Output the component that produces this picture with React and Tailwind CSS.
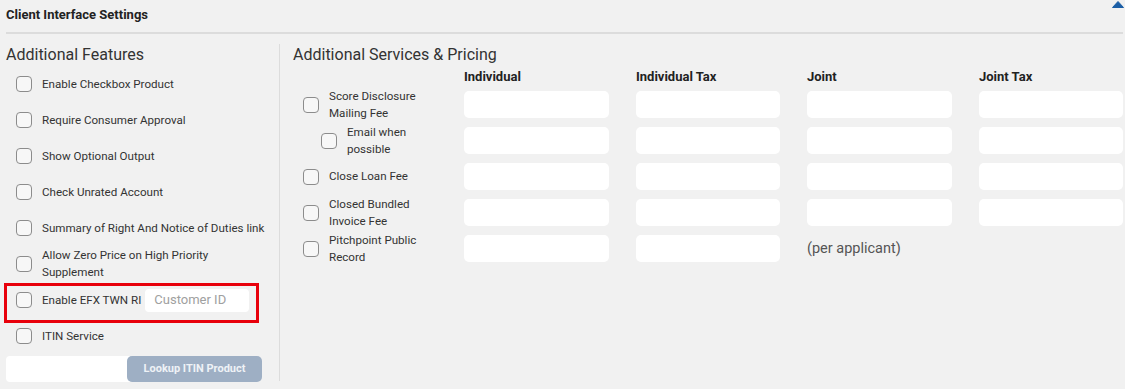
const features = [
  'Enable Checkbox Product',
  'Require Consumer Approval',
  'Show Optional Output',
  'Check Unrated Account',
  'Summary of Right And Notice of Duties link',
  'Allow Zero Price on High Priority Supplement',
]

const services = [
  { label: 'Score Disclosure Mailing Fee', cols: 4 },
  { label: 'Email when possible', cols: 4, indent: true },
  { label: 'Close Loan Fee', cols: 4 },
  { label: 'Closed Bundled Invoice Fee', cols: 4 },
  { label: 'Pitchpoint Public Record', cols: 2, note: '(per applicant)' },
]

function Checkbox() {
  return (
    <span className="inline-block w-[16px] h-[16px] shrink-0 rounded-[4px] border-[1.5px] border-[#8c8c8c] bg-[#f7f7f7]" />
  )
}

function Field({ className = '' }) {
  return <div className={`h-[27px] rounded-[5px] bg-white ${className}`} />
}

export default function App() {
  return (
    <div
      className="w-[1125px] h-[389px] overflow-hidden bg-[#f1f1f1] px-[6px] text-[#333]"
      style={{ fontFamily: 'Roboto, "Liberation Sans", sans-serif' }}
    >
      {/* Header */}
      <div className="flex justify-between h-[34px] border-b-2 border-[#dcdcdc] w-[1117px]">
        <div className="pt-[6px] text-[13px] leading-[18px] font-bold text-[#222]">
          Client Interface Settings
        </div>
        <svg className="mt-[1px] -mr-[1px]" width="12" height="7" viewBox="0 0 12 7">
          <path d="M6 0.5 L11.5 6.5 L0.5 6.5 Z" fill="#1c5fa6" stroke="#1c5fa6" strokeLinejoin="round" />
        </svg>
      </div>

      <div className="flex">
        {/* Additional Features */}
        <div className="w-[274px] shrink-0 mt-[10px] h-[337px] border-r border-[#dcdcdc]">
          <div className="h-[22px] pt-[1px] text-[16px] leading-[20px] text-[#333]">Additional Features</div>
          {features.map((f) => (
            <div key={f} className="h-[36px] flex items-center pl-[10px] gap-[10px]">
              <Checkbox />
              <span className="text-[11.6px] leading-[17px] w-[226px]">{f}</span>
            </div>
          ))}
          <div className="relative h-[36px] flex items-center pl-[10px] gap-[10px]">
            <Checkbox />
            <span className="text-[11.6px] leading-[17px]">Enable EFX TWN RI</span>
            <div className="w-[104px] h-[23px] -ml-[6px] rounded-[4px] bg-white flex items-center pl-[9px] text-[13px] text-[#a0a0a0]">
              Customer ID
            </div>
            <div className="absolute left-[-2px] top-[1px] w-[255px] h-[40px] border-[3px] border-[#e8000b]" />
          </div>
          <div className="h-[36px] flex items-center pl-[10px] gap-[10px]">
            <Checkbox />
            <span className="text-[11.6px] leading-[17px]">ITIN Service</span>
          </div>
          <div className="flex mt-[2px] h-[26px]">
            <div className="w-[124px] bg-white rounded-l-[4px]" />
            <button className="-ml-[3px] w-[135px] rounded-[5px] bg-[#9eafc4] text-[11px] font-bold text-[#eef2f6]">
              Lookup ITIN Product
            </button>
          </div>
        </div>

        {/* Additional Services & Pricing */}
        <div className="pl-[13px] mt-[10px] shrink-0">
          <div className="h-[22px] pt-[1px] text-[16px] leading-[20px] text-[#333]">Additional Services &amp; Pricing</div>
          <div className="grid grid-cols-[144px_145px_144px_145px_144px] gap-x-[27px] h-[25px] pt-[4px] text-[13px] leading-[14px] font-bold text-[#222]">
            <div />
            <div>Individual</div>
            <div>Individual Tax</div>
            <div>Joint</div>
            <div>Joint Tax</div>
          </div>
          <div className="grid grid-cols-[144px_145px_144px_145px_144px] gap-x-[27px] gap-y-[9px] auto-rows-[27px]">
            {services.map((s) => (
              <div key={s.label} className="contents">
                <div className={`flex items-center gap-[10px] ${s.indent ? 'pl-[28px]' : 'pl-[10px]'}`}>
                  <Checkbox />
                  <span className={`text-[11.6px] leading-[17px] ${s.indent ? 'w-[70px]' : 'w-[100px]'}`}>{s.label}</span>
                </div>
                {Array.from({ length: s.cols }).map((_, i) => (
                  <Field key={i} />
                ))}
                {s.note && (
                  <div className="flex items-center text-[14.5px] text-[#555]">{s.note}</div>
                )}
                {s.note && <div />}
              </div>
            ))}
          </div>
        </div>
      </div>
    </div>
  )
}
